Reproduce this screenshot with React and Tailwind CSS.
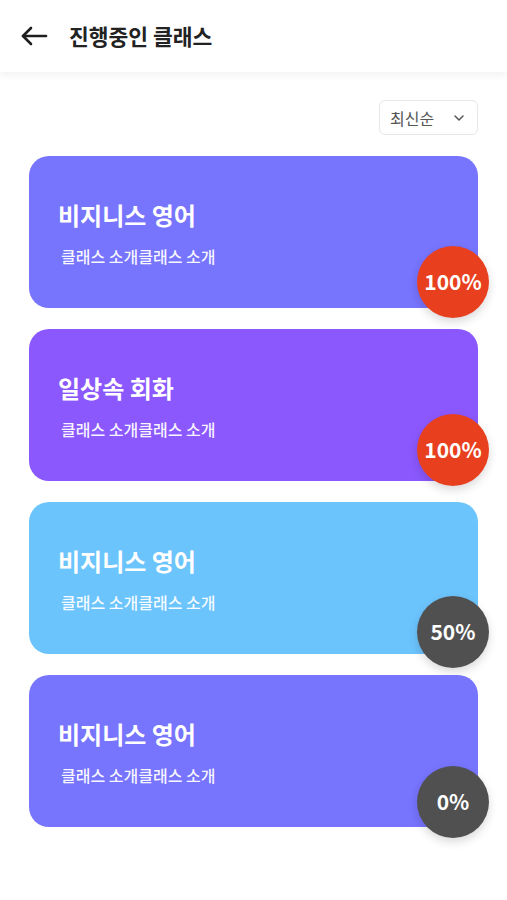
import { ChevronDown } from "lucide-react";

const classes = [
  { id: 1, title: "비지니스 영어", intro: "클래스 소개클래스 소개", progress: 100, color: "bg-[#7774fe]", badge: "bottom-[-10px]" },
  { id: 2, title: "일상속 회화", intro: "클래스 소개클래스 소개", progress: 100, color: "bg-[#8b58fd]", badge: "bottom-[-5px]" },
  { id: 3, title: "비지니스 영어", intro: "클래스 소개클래스 소개", progress: 50, color: "bg-[#6cc4fd]", badge: "bottom-[-14px]" },
  { id: 4, title: "비지니스 영어", intro: "클래스 소개클래스 소개", progress: 0, color: "bg-[#7774fe]", badge: "bottom-[-11px]" },
];

export default function App() {
  return (
    <div className="min-h-[900px] bg-white font-['Noto_Sans_CJK_KR','Noto_Sans',sans-serif]">
      <header className="flex h-[72px] items-center bg-white px-5 shadow-[0_3px_8px_rgba(0,0,0,0.06)]">
        <svg width="28" height="22" viewBox="0 0 28 22" fill="none" stroke="#1f1f1f" strokeWidth="2.6" strokeLinecap="round" strokeLinejoin="round">
          <path d="M26 11H3" />
          <path d="M11 3L3 11l8 8" />
        </svg>
        <h1 className="ml-[21px] text-[21.5px] font-bold text-[#222]">진행중인 클래스</h1>
      </header>

      <div className="flex justify-end px-[29px] pt-[28px]">
        <button
          type="button"
          className="flex h-[35px] w-[99px] items-center justify-between rounded-md border border-gray-200 bg-white pl-[10px] pr-[10px] text-[16px] text-[#555]"
        >
          최신순
          <ChevronDown size={16} strokeWidth={2.2} className="text-[#555]" />
        </button>
      </div>

      <div className="mt-[21px] space-y-[21px] px-[29px]">
        {classes.map((item) => (
          <ClassCard key={item.id} item={item} />
        ))}
      </div>
    </div>
  );
}

function ClassCard({ item }) {
  const done = item.progress === 100;
  return (
    <div className={`relative h-[152px] rounded-[20px] ${item.color} pl-[29px] pt-[44px] text-white`}>
      <div className="text-[24px] font-bold leading-[30px]">{item.title}</div>
      <div className="ml-[3px] mt-[16px] text-[16px] font-medium leading-[20px] text-white/95">{item.intro}</div>
      <div
        className={`absolute right-[-11px] ${item.badge} flex h-[72px] w-[72px] items-center justify-center rounded-full text-[21px] font-bold shadow-[0_4px_10px_rgba(0,0,0,0.15)] ${
          done ? "bg-[#e8401f]" : "bg-[#505050]"
        }`}
      >
        {item.progress}%
      </div>
    </div>
  );
}
